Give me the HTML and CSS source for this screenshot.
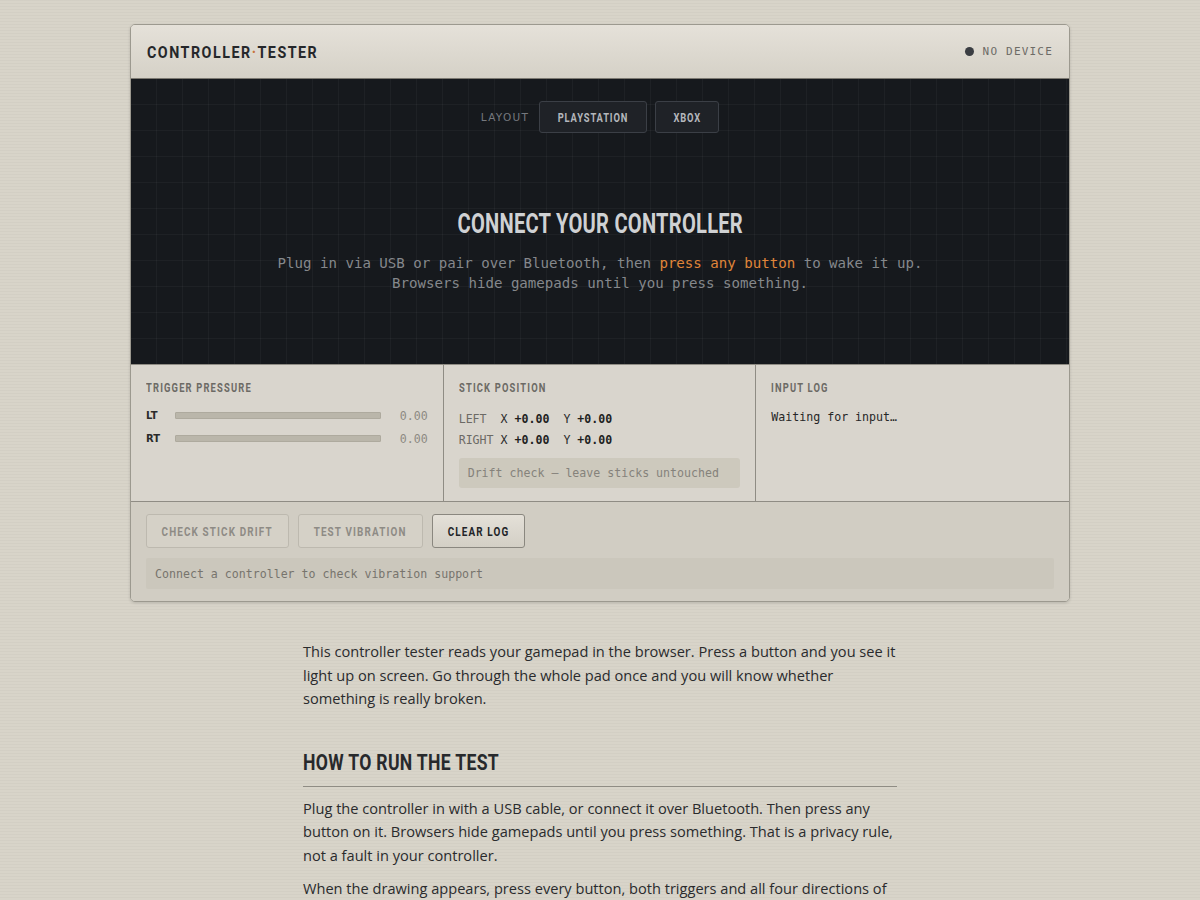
FILE: index.html
```html
<!DOCTYPE html>
<html>
<head>
<meta charset="utf-8">
<link rel="stylesheet" href="styles.css">
</head>
<body>
<div class="page">
  <div class="card">
    <header class="card-head">
      <div class="brand"><span class="cond">CONTROLLER<span class="dot">·</span>TESTER</span></div>
      <div class="status"><span class="status-dot"></span>NO DEVICE</div>
    </header>
    <section class="stage">
      <div class="layout-row">
        <span class="layout-label">LAYOUT</span>
        <button class="layout-btn w-ps"><span class="cond">PLAYSTATION</span></button>
        <button class="layout-btn w-xbox"><span class="cond">XBOX</span></button>
      </div>
      <div class="connect">
        <h1 class="connect-title"><span class="cond">CONNECT YOUR CONTROLLER</span></h1>
        <p class="connect-text">Plug in via USB or pair over Bluetooth, then <span class="hl">press any button</span> to wake it up.<br>Browsers hide gamepads until you press something.</p>
      </div>
    </section>
    <section class="panels">
      <div class="panel">
        <div class="panel-label"><span class="cond">TRIGGER PRESSURE</span></div>
        <div class="trig-row"><span class="trig-name">LT</span><span class="trig-bar"></span><span class="trig-val">0.00</span></div>
        <div class="trig-row"><span class="trig-name">RT</span><span class="trig-bar"></span><span class="trig-val">0.00</span></div>
      </div>
      <div class="panel">
        <div class="panel-label"><span class="cond">STICK POSITION</span></div>
        <div class="stick-list">
          <div class="stick-row"><span class="stick-name">LEFT </span> X <b>+0.00</b>  Y <b>+0.00</b></div>
          <div class="stick-row"><span class="stick-name">RIGHT</span> X <b>+0.00</b>  Y <b>+0.00</b></div>
        </div>
        <div class="drift">Drift check — leave sticks untouched</div>
      </div>
      <div class="panel">
        <div class="panel-label"><span class="cond">INPUT LOG</span></div>
        <div class="log">Waiting for input…</div>
      </div>
    </section>
    <section class="actions">
      <div class="btn-row">
        <button class="act-btn disabled w-drift"><span class="cond">CHECK STICK DRIFT</span></button>
        <button class="act-btn disabled w-vib"><span class="cond">TEST VIBRATION</span></button>
        <button class="act-btn w-clear"><span class="cond">CLEAR LOG</span></button>
      </div>
      <div class="note">Connect a controller to check vibration support</div>
    </section>
  </div>
  <article class="article">
    <p>This controller tester reads your gamepad in the browser. Press a button and you see it light up on screen. Go through the whole pad once and you will know whether something is really broken.</p>
    <h2><span class="cond">HOW TO RUN THE TEST</span></h2>
    <p>Plug the controller in with a USB cable, or connect it over Bluetooth. Then press any button on it. Browsers hide gamepads until you press something. That is a privacy rule, not a fault in your controller.</p>
    <p>When the drawing appears, press every button, both triggers and all four directions of the sticks. Watch the screen as you go.</p>
  </article>
</div>
</body>
</html>
```

FILE: styles.css
```css
* { box-sizing: border-box; }
html, body { margin: 0; padding: 0; }
body {
  background-color: #d8d4c9;
  background-image: repeating-linear-gradient(180deg, rgba(0,0,0,0.025) 0 1px, transparent 1px 3px);
  font-family: "Open Sans", "Noto Sans", sans-serif;
  color: #2a2b2d;
}
.page { padding-top: 24px; }
.cond {
  display: inline-block;
  font-family: Roboto, "Liberation Sans", sans-serif;
  font-weight: 700;
  white-space: nowrap;
  transform-origin: left center;
}
.card {
  width: 940px;
  margin: 0 auto;
  border: 1px solid #9c998f;
  border-radius: 5px;
  overflow: hidden;
  box-shadow: 0 1px 3px rgba(0,0,0,0.15);
}
.card-head {
  height: 54px;
  display: flex;
  align-items: center;
  justify-content: space-between;
  padding: 0 16px;
  background: linear-gradient(180deg, #e5e1d9, #d5d1c7);
  border-bottom: 1px solid #7d7a72;
}
.brand .cond {
  font-size: 17px;
  letter-spacing: 1.8px;
  color: #25272a;
  transform: scaleX(0.84);
}
.brand .dot { color: #c7733a; }
.status {
  display: flex;
  align-items: center;
  gap: 9px;
  font-family: "DejaVu Sans Mono", monospace;
  font-size: 11px;
  letter-spacing: 1.2px;
  color: #6d6b66;
}
.status-dot {
  width: 9px; height: 9px; border-radius: 50%;
  background: #3a3d42;
}
.stage {
  height: 285px;
  background-color: #16191d;
  background-image:
    linear-gradient(90deg, rgba(255,255,255,0.035) 1px, transparent 1px),
    linear-gradient(180deg, rgba(255,255,255,0.035) 1px, transparent 1px);
  background-size: 26px 26px;
  background-position: 25px 25px;
  padding-top: 22px;
  display: flex;
  flex-direction: column;
  align-items: center;
}
.layout-row {
  display: flex;
  align-items: center;
  gap: 8px;
}
.layout-label {
  font-family: "DejaVu Sans", sans-serif;
  font-size: 10.5px;
  letter-spacing: 1.3px;
  color: #75787d;
  margin-right: 2px;
}
.layout-btn {
  height: 32px;
  padding: 0;
  background: #1f2227;
  border: 1px solid #3b3f46;
  border-radius: 3px;
  display: flex;
  align-items: center;
  justify-content: center;
}
.layout-btn .cond {
  color: #b4b7bc;
  font-size: 13px;
  letter-spacing: 1.2px;
  transform-origin: center;
  transform: scaleX(0.72);
}
.w-ps { width: 108px; }
.w-xbox { width: 64px; }
.connect { margin-top: 72px; text-align: center; }
.connect-title {
  margin: 0;
  font-size: 28px;
  line-height: 34px;
  font-weight: 700;
}
.connect-title .cond {
  color: #cfd1d3;
  letter-spacing: 0.3px;
  transform-origin: center;
  transform: scaleX(0.72);
}
.connect-text {
  margin: 12px 0 0;
  font-family: "DejaVu Sans Mono", monospace;
  font-size: 14.1px;
  line-height: 20px;
  color: #85888c;
}
.hl { color: #e0863a; }
.panels {
  display: grid;
  grid-template-columns: 1fr 1fr 1fr;
  background: #d9d5cd;
  border-top: 1px solid #8f8c84;
  border-bottom: 1px solid #8f8c84;
}
.panel {
  height: 136px;
  padding: 15px 15px 0;
  border-right: 1px solid #8f8c84;
}
.panel:last-child { border-right: none; }
.panel-label {
  height: 16px;
  display: flex;
  align-items: center;
  margin-bottom: 8px;
}
.panel-label .cond {
  font-size: 12px;
  line-height: 16px;
  letter-spacing: 1.5px;
  color: #6c6a65;
  transform: scaleX(0.78);
}
.trig-row {
  display: flex;
  align-items: center;
  height: 23px;
}
.trig-name {
  width: 29px;
  font-family: "DejaVu Sans", sans-serif;
  font-weight: 700;
  font-size: 10px;
  color: #2a2a2a;
}
.trig-bar {
  flex: 1;
  height: 7px;
  background: #bab6aa;
  border: 1px solid #aeaa9e;
  border-radius: 1px;
}
.trig-val {
  width: 47px;
  text-align: right;
  font-family: "DejaVu Sans Mono", monospace;
  font-size: 11.6px;
  color: #8d8a83;
}
.stick-list { margin-top: 13px; }
.stick-row {
  font-family: "DejaVu Sans Mono", monospace;
  font-size: 11.6px;
  line-height: 21px;
  color: #2a2a2a;
  white-space: pre;
}
.stick-row b { font-weight: 600; color: #1f1f1f; }
.stick-name { color: #6c6a65; }
.drift {
  margin-top: 7px;
  height: 30px;
  display: flex;
  align-items: center;
  padding: 0 9px;
  background: #cdc9bd;
  border-radius: 3px;
  font-family: "DejaVu Sans Mono", monospace;
  font-size: 11.6px;
  color: #85827b;
}
.log {
  font-family: "DejaVu Sans Mono", monospace;
  font-size: 11.6px;
  line-height: 18px;
  color: #262626;
  margin-top: 12px;
}
.actions {
  background: #d1cdc3;
  padding: 12px 15px 12px;
}
.btn-row { display: flex; gap: 9px; }
.act-btn {
  height: 34px;
  padding: 0;
  border-radius: 3px;
  border: 1px solid #8a877f;
  background: linear-gradient(180deg, #e4e0d8, #d3cfc5);
  display: flex;
  align-items: center;
  justify-content: center;
}
.act-btn .cond {
  color: #222428;
  font-size: 13px;
  letter-spacing: 1.5px;
  transform-origin: center;
  transform: scaleX(0.76);
}
.act-btn.disabled {
  border-color: #bdb9af;
  background: #d5d1c7;
}
.act-btn.disabled .cond { color: #8e8b85; }
.w-drift { width: 143px; }
.w-vib { width: 125px; }
.w-clear { width: 93px; }
.note {
  margin-top: 10px;
  height: 31px;
  display: flex;
  align-items: center;
  padding: 0 9px;
  background: #cbc7bc;
  border-radius: 2px;
  font-family: "DejaVu Sans Mono", monospace;
  font-size: 11.6px;
  color: #77746d;
}
.article {
  width: 594px;
  margin: 38px auto 0;
  font-size: 14.6px;
  line-height: 23.5px;
  color: #2a2b2d;
}
.article p { margin: 0 0 10px; }
.article h2 {
  margin: 35px 0 10px;
  padding-bottom: 8px;
  border-bottom: 1px solid #8f8c84;
  font-size: 22px;
  line-height: 30px;
  font-weight: 700;
}
.article h2 .cond {
  letter-spacing: 0.4px;
  color: #27292c;
  transform: scaleX(0.8);
}
```
